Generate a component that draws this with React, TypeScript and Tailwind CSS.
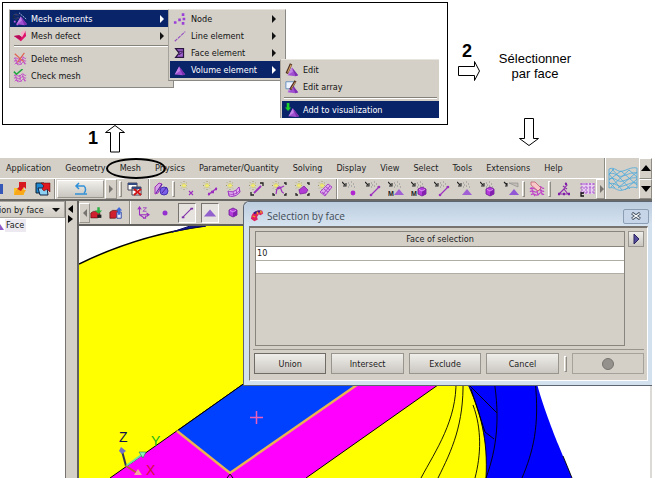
import React from 'react';
import clsx from 'clsx';

interface IconProps {
  children: React.ReactNode;
  size?: string;
}

const Icon: React.FC<IconProps> = ({ children, size = 'w-4 h-4' }) => (
  <svg viewBox="0 0 16 16" className={clsx('shrink-0', size)} fill="none" aria-hidden="true">
    {children}
  </svg>
);

const PURPLE = '#9c2fc0';

const Spark = () => (
  <>
    <path d="M5 0v9M1 4.500h8M2 1.500l6 6M8 1.500l-6 6" stroke="#8a8850" strokeWidth=".8" strokeDasharray="1 1" />
    <path d="M5 2v5M2.500 4.500h5M3 2.500l4 4M7 2.500l-4 4" stroke="#f4ee6a" strokeWidth=".9" />
  </>
);

const Pick = () => (
  <>
    <path d="M0 1l3 3M4 2v3H1" stroke="#222" strokeWidth="1.1" />
    <path d="M6 2h1M9 1h1M11 3h1M7 4h1M9 5h1M12 6h1M6 6h1" stroke="#8a8a8a" strokeWidth="1.1" />
  </>
);

const Cube = ({ x, y }: { x: number; y: number }) => (
  <g transform={`translate(${x} ${y})`}>
    <path d="M4 0l4 2v5l-4 2-4-2V2z" fill="#b63bdc" stroke="#6a1c90" strokeWidth=".8" />
    <path d="M4 4v5l4-2V2z" fill="#8420b0" />
    <path d="M1 2.400L4 4l3-1.600" stroke="#e8a8fc" strokeWidth=".8" />
  </g>
);

const Pyramid = ({ x = 0, y = 0 }: { x?: number; y?: number }) => (
  <g transform={`translate(${x} ${y})`}>
    <path d="M1 11L6 2l7 9-3 1z" fill="#a04fd0" />
    <path d="M6 2l7 9-3 1z" fill="#7d2fb0" />
    <path d="M1 11l5-9 1 5z" fill="#c383e6" />
  </g>
);

const Squiggle = () => (
  <path
    d="M1 8c3-4 5 3 8-1s4 2 6 0M1 11c3-4 5 3 8-1s4 2 6 0M2 14c3-4 5 3 8-1s3 2 5 0M2 7c3 2 0 5 4 8M7 7c3 3-1 4 3 7M12 6c-3 3 2 5 1 8"
    stroke="#c040c8"
    strokeWidth="1.1"
  />
);

const M = () => (
  <text x="0" y="15" fontSize="7" fontWeight="bold" fill="#222" fontFamily="Liberation Sans, sans-serif">
    M
  </text>
);

const PickLine = () => (
  <>
    <Pick />
    <path d="M6 14l8-8" stroke={PURPLE} strokeWidth="1.1" />
    <circle cx="6" cy="14" r="1.300" fill={PURPLE} />
    <circle cx="14" cy="6" r="1.300" fill={PURPLE} />
  </>
);

const creationIcons = [
  <><Spark /><path d="M10 10l4 4M14 10l-4 4" stroke={PURPLE} strokeWidth="1.1" /></>,
  <><Spark /><path d="M6 14l9-7" stroke={PURPLE} strokeWidth="1.2" /><path d="M6 13h2M13 8h2M9 11h3" stroke={PURPLE} strokeWidth="2.4" /></>,
  <><Spark /><path d="M3 10c4 2 8 0 11-4l1 5c-3 4-7 5-11 4z" fill="#e3b4f0" stroke={PURPLE} /><path d="M4 13c4 1 8 0 11-4M8 11l1 4M11 9l1 4" stroke={PURPLE} strokeWidth=".8" /></>,
  <><Spark /><path d="M6 12l7-7" stroke={PURPLE} strokeWidth="1.8" /><path d="M12 2h3v3M3 11v3h3" stroke="#222" strokeWidth="1.3" /></>,
  <><Spark /><path d="M5 13c1-4 0-6 3-7s1 6 5 6M7 8l6-3" stroke={PURPLE} strokeWidth="1.2" /><path d="M13 2h2v2M2 12v2h2M13 14h2v-2" stroke="#222" strokeWidth="1.3" /></>,
  <><Spark /><path d="M5 9l5-4 4 4-2 3-6 1z" fill="#b13bd4" stroke="#7d24a0" strokeWidth=".8" /><path d="M13 2h2v2M2 12v2h2M13 14h2v-2" stroke="#222" strokeWidth="1.3" /></>,
  <><Spark /><path d="M3 11l8-8 4 3-7 9z" fill="#dda9ee" stroke={PURPLE} strokeWidth=".8" /><path d="M5 11l4 3M7 8l4 3M9 6l4 3M6 13l7-8" stroke={PURPLE} strokeWidth=".8" /></>,
];

const pickingIcons = [
  <><Pick /><circle cx="11" cy="12" r="2.400" fill="#b025d0" /></>,
  <PickLine />,
  <><Pick /><path d="M6 14l5-6 5 6z" fill="#a060d4" /><M /></>,
  <><Pick /><Cube x={7} y={6} /><M /></>,
  <PickLine />,
  <><Pick /><path d="M5 14l5-6 5 6z" fill="#a060d4" /></>,
  <><Pick /><Cube x={6} y={6} /></>,
  <><path d="M1 1l3 3M4 2v3H2" stroke="#222" strokeWidth="1.1" /><path d="M6 2h9v4z" fill="#c4bfb9" stroke="#888" strokeWidth=".6" /><path d="M6 14l5-6 5 6z" fill="#9157d4" /></>,
];

const ToolButton: React.FC<{ label: string; className?: string; children: React.ReactNode }> = ({
  label,
  className = 'w-[23px]',
  children,
}) => (
  <button type="button" aria-label={label} className={clsx('flex h-5 shrink-0 items-center justify-center', className)}>
    {children}
  </button>
);

const Handle = () => <span className="h-4 w-[3px] shrink-0 border border-[#8f8c86] border-t-white border-l-white" />;

const Divider = () => <span className="h-full w-[2px] shrink-0 border-l border-[#8f8c86] bg-white" />;

const Chevron = ({ flip = false }: { flip?: boolean }) => (
  <svg viewBox="0 0 6 8" className={clsx('h-2 w-[6px]', flip && 'rotate-180')} aria-hidden="true">
    <path d="M1 0l4 4-4 4z" fill="#77746f" />
  </svg>
);

interface MenuRowProps {
  icon: React.ReactNode;
  label: string;
  active?: boolean;
  submenu?: boolean;
}

const MenuRow: React.FC<MenuRowProps> = ({ icon, label, active, submenu }) => (
  <button
    type="button"
    role="menuitem"
    className={clsx(
      'flex h-[17px] w-full items-center gap-1 pr-1 pl-[3px] text-left whitespace-nowrap',
      active ? 'bg-[#0a246a] text-white' : 'text-[#111]'
    )}
  >
    <Icon size="w-[14px] h-[14px]">{icon}</Icon>
    <span className="flex-1">{label}</span>
    {submenu && (
      <svg viewBox="0 0 4 8" className="h-2 w-1" aria-hidden="true">
        <path d="M0 0l4 4-4 4z" fill="currentColor" />
      </svg>
    )}
  </button>
);

const menuBox = 'border border-[#8b8983] border-t-[#e8e5df] border-l-[#a5a29c] bg-[#d4d0c8]';

const ContextMenus = () => (
  <div className="relative w-[165px]" role="menu" aria-label="Mesh">
    <div className={clsx(menuBox, 'pr-[5px] pb-[3px]')}>
      <MenuRow
        active
        submenu
        label="Mesh elements"
        icon={
          <>
            <text x="0" y="8" fontSize="9" fontWeight="bold" fill="#02020a" stroke="#6a78b0" strokeWidth=".3" fontFamily="Liberation Sans, sans-serif">C</text>
            <path d="M7 1l8 7" stroke="#c8d4f4" strokeDasharray="2 1" />
            <Pyramid x={3} y={3} />
            <path d="M1 11h2M4 14h2" stroke="#c060e8" strokeWidth="2" />
          </>
        }
      />
      <MenuRow
        submenu
        label="Mesh defect"
        icon={<><path d="M1 8l6-1 3 2 4-7 1 6-6 6z" fill="#e0106c" /><path d="M9 4l4-3 1 2-4 7z" fill="#f4b0c8" /><path d="M1 8l6-1 3 2-2 3z" fill="#b40c58" /></>}
      />
      <div className="mt-px mb-[3px] ml-1 border-t border-[#85827c] border-b border-b-white" />
      <MenuRow label="Delete mesh" icon={<><Squiggle /><path d="M2 2l10 9M13 1L5 12" stroke="#e06050" strokeWidth="1.3" /></>} />
      <MenuRow label="Check mesh" icon={<><Squiggle /><path d="M1 3l3 3 7-6" stroke="#20a840" strokeWidth="1.8" /></>} />
    </div>

    <div className={clsx(menuBox, 'absolute top-0 left-[159px] w-[118px] pr-[5px] pb-[2px] pl-px')} role="menu">
      <MenuRow submenu label="Node" icon={<path d="M1 12h3M6 9h3M10 3h3M11 8h3M10 13h3" stroke="#9a40d8" strokeWidth="3" />} />
      <MenuRow submenu label="Line element" icon={<path d="M2 14L14 3" stroke="#9448c0" strokeWidth="1.2" strokeDasharray="4 1" />} />
      <MenuRow submenu label="Face element" icon={<><path d="M3 3h9v10H3l4-5z" fill="#a060d0" stroke="#2a1440" strokeWidth="1.4" /><path d="M6 6h5M7 10l4-3" stroke="#2a1440" /></>} />
      <MenuRow active submenu label="Volume element" icon={<Pyramid x={1} y={2} />} />
    </div>

    <div className={clsx(menuBox, 'absolute top-[50px] left-[271px] w-[159px] border-r-0 border-b-0 pt-px pl-px')} role="menu">
      <MenuRow label="Edit" icon={<><Pyramid x={2} y={3} /><path d="M2 12L7 1" stroke="#4b3020" strokeWidth="3" /><path d="M3 11L7 2" stroke="#d8a068" strokeWidth="1.4" /></>} />
      <MenuRow label="Edit array" icon={<><path d="M1 2h9v8H1z" fill="#eef4ff" stroke="#5b88b8" /><Pyramid x={2} y={3} /><path d="M6 11l6-10" stroke="#4b3020" strokeWidth="2.6" /><path d="M7 10l5-8" stroke="#d8a068" /></>} />
      <div className="mx-[2px] my-[2px] border-t border-[#85827c] border-b border-b-white" />
      <MenuRow active label="Add to visualization" icon={<><Pyramid x={3} y={4} /><path d="M2 0h3v5h2L3.500 9 0 5h2z" fill="#18d028" /></>} />
    </div>
  </div>
);

const menus = [
  'Application',
  'Geometry',
  'Mesh',
  'Physics',
  'Parameter/Quantity',
  'Solving',
  'Display',
  'View',
  'Select',
  'Tools',
  'Extensions',
  'Help',
];

const MenuBar = () => (
  <nav className="flex h-5 items-center gap-[14px] pl-[6px]">
    {menus.map((menu) => (
      <div key={menu} className="relative">
        <button type="button" className="block whitespace-nowrap">
          {menu}
        </button>
        {menu === 'Mesh' && (
          <span className="pointer-events-none absolute -top-1 -left-[14px] z-10 h-[21px] w-[60px] rounded-[50%] border-2 border-black" />
        )}
      </div>
    ))}
  </nav>
);

const MainToolbar = () => (
  <div className="flex h-[21px] items-center overflow-hidden border-t border-white">
    <ToolButton label="Save" className="w-2 justify-start">
      <svg viewBox="0 0 4 12" className="h-3 w-1" aria-hidden="true"><path d="M0 1h3v10H0z" fill="#3558b8" /></svg>
    </ToolButton>
    <ToolButton label="Import">
      <Icon><path d="M2 7h10v7H2z" fill="#f6c530" /><path d="M2 14l2-5h10l-3 5z" fill="#f8a818" /><path d="M5 8l2-2V1h7v7l-2-2-3 4z" fill="#d81820" /></Icon>
    </ToolButton>
    <ToolButton label="Export">
      <Icon><path d="M1 2h8v10H1z" fill="#1e88d0" stroke="#123" /><path d="M3 7h9l1 7H5z" fill="#8cd0f4" stroke="#124" /><path d="M6 2h9v9l-3-3-3 2-2-2 2-3z" fill="#e01820" stroke="#600" strokeWidth=".5" /></Icon>
    </ToolButton>
    <Divider />
    <ToolButton label="Undo" className="mx-px h-[18px] w-[47px] border border-[#98958f] border-t-white border-l-white bg-linear-to-b from-[#f0eeea] to-[#c9c6c0]">
      <Icon><path d="M4 5h7a3 4 0 0 1 0 7M6 2L3 5l3 3M2 13h12" stroke="#3090d8" strokeWidth="1.5" /></Icon>
    </ToolButton>
    <ToolButton label="More undo" className="w-3 border border-[#98958f] border-t-white border-l-white"><Chevron /></ToolButton>
    <span className="ml-[2px] flex"><Handle /></span>
    <ToolButton label="Close windows" className="w-[26px]">
      <Icon><path d="M1 2h9v7H1zM5 6h9v8H5z" fill="#fff" stroke="#445" /><path d="M1 2h9v2H1zM5 6h9v2H5z" fill="#334a80" /><path d="M7 8l7 6M14 8l-7 6" stroke="#d01818" strokeWidth="2" /></Icon>
    </ToolButton>
    <Divider />
    <ToolButton label="Physics" className="w-[22px]">
      <Icon><path d="M2 6l4-4 3 1-4 9-3 1z" fill="#d8a0e4" stroke="#a030b8" /><circle cx="11" cy="10" r="4" fill="#7b60e8" stroke="#4530b0" /><path d="M9 12l5-6M3 12l6-9" stroke="#5020a0" /></Icon>
    </ToolButton>
    <Handle />
    {creationIcons.map((icon, i) => (
      <ToolButton key={i} label={`Create ${i + 1}`}><Icon>{icon}</Icon></ToolButton>
    ))}
    <Divider />
    {pickingIcons.map((icon, i) => (
      <ToolButton key={i} label={`Pick ${i + 1}`}><Icon>{icon}</Icon></ToolButton>
    ))}
    <Handle />
    <ToolButton label="Delete mesh">
      <Icon><Squiggle /><path d="M2 1h4l6 6-3 3-7-6z" fill="#f8c8c8" stroke="#c06070" strokeWidth=".8" /></Icon>
    </ToolButton>
    <Handle />
    <ToolButton label="Axis" className="w-[26px]">
      <Icon><path d="M9 2l2 2-3 4 4 5M8 8l-5 5h11M7 5l4 3" stroke="#9028b0" strokeWidth="1.1" /><path d="M2 13h2M7 13h2M12 13h2M9 3h2" stroke="#8020a8" strokeWidth="2.4" /></Icon>
    </ToolButton>
    <ToolButton label="Grid" className="w-[19px]">
      <Icon><path d="M3 2h12v11H3z" fill="#e8cff0" /><path d="M3 2v11M7 2v11M11 2v11M15 2v11M1 3h15M1 7h15M1 11h15" stroke="#a040c8" strokeWidth=".8" strokeDasharray="2 1" /><path d="M5 12H2v3h3" stroke="#111" strokeWidth="1.3" /></Icon>
    </ToolButton>
    <ToolButton label="More tools" className="ml-auto w-3 border border-[#98958f] border-t-white border-l-white"><Chevron /></ToolButton>
  </div>
);

const MeshSwitcher = () => (
  <div className="flex w-12 shrink-0 border-l border-[#8f8c86]">
    <div className="flex flex-1 items-center justify-center border-l border-white">
      <svg viewBox="0 0 30 26" className="h-[26px] w-[30px]" fill="none" stroke="#49a8dc" strokeWidth=".8" aria-hidden="true">
        <path d="M1 3c6-3 8 4 14 2s9-4 14-3M1 8c6-3 8 4 14 2s9-4 14-3M1 13c6-3 8 4 14 2s9-4 14-3M1 18c6-3 8 4 14 2s9-4 14-3M1 22c6-2 8 4 14 2s9-4 14-2" />
        <path d="M1 3v19M29 2v20M1 8l5-5M1 14L13 5M3 21L21 4M10 22L29 6M17 24l12-11M1 8l13 16M4 3l18 20M13 5l16 14M21 4l8 7M1 16l6 6" />
      </svg>
    </div>
    <div className="flex w-[13px] flex-col">
      <button type="button" aria-label="Previous" className="flex flex-1 items-center justify-center border border-[#8f8c86] border-t-white border-l-white">
        <svg viewBox="0 0 10 6" className="h-[6px] w-[10px]" aria-hidden="true"><path d="M0 6l5-6 5 6z" /></svg>
      </button>
      <button type="button" aria-label="Next" className="flex flex-1 items-center justify-center border border-[#8f8c86] border-t-white border-l-white">
        <svg viewBox="0 0 10 6" className="h-[6px] w-[10px]" aria-hidden="true"><path d="M0 0l5 6 5-6z" /></svg>
      </button>
    </div>
  </div>
);

const SidePanel = () => (
  <aside className="flex w-[66px] shrink-0 flex-col overflow-hidden border-r border-[#77746f] bg-white">
    <div className="relative flex h-[17px] justify-end border border-l-0 border-[#a5a29c] bg-linear-to-b from-[#e8e5df] to-[#d0ccc4]">
      <select aria-label="Selection mode" className="w-[90px] shrink-0 appearance-none bg-transparent text-[#222]">
        <option>Selection by face</option>
      </select>
      <svg viewBox="0 0 8 4" className="pointer-events-none absolute top-[6px] right-1 h-1 w-2" aria-hidden="true">
        <path d="M0 0h8L4 4z" fill="#111" />
      </svg>
    </div>
    <a href="#face" className="flex h-[15px] items-center gap-px leading-[13px] text-[#222]">
      <svg viewBox="0 0 4 8" className="h-2 w-1" aria-hidden="true"><path d="M0 2l4 6H0z" fill="#8e5bc8" /></svg>
      <span className="bg-[#eceaf0] pr-[2px] pl-px">Face</span>
    </a>
  </aside>
);

const Splitter = () => (
  <div className="flex w-[13px] shrink-0 flex-col items-start border-r-2 border-[#63615d] bg-[#d4d0c8] pt-1 pl-[2px]">
    <button type="button" aria-label="Collapse panel">
      <svg viewBox="0 0 5 8" className="h-2 w-[5px]" aria-hidden="true"><path d="M5 0v8L0 4z" /></svg>
    </button>
    <button type="button" aria-label="Expand panel" className="mt-[2px]">
      <svg viewBox="0 0 5 8" className="h-2 w-[5px]" aria-hidden="true"><path d="M0 0v8l5-4z" /></svg>
    </button>
  </div>
);

const ViewToolbar = () => (
  <div className="flex h-[25px] shrink-0 items-center border-b-2 border-[#63615d] bg-[#d4d0c8]">
    <ToolButton label="Previous tools" className="w-[11px] border border-[#98958f] border-t-white border-l-white"><Chevron flip /></ToolButton>
    <ToolButton label="Show part" className="w-[13px]">
      <Icon size="w-[13px] h-4"><path d="M1 8l3-2h8v6l-3 2H1z" fill="#d02030" stroke="#400" strokeWidth=".7" /><path d="M9 1h3v4h3l-4.500 4L6 5h3z" fill="#28b040" /><path d="M9 10h5v4H9z" fill="#222" /></Icon>
    </ToolButton>
    <ToolButton label="Hide part" className="w-[26px]">
      <Icon size="w-[14px] h-[14px]"><path d="M1 7l3-2h6v7l-3 2H1z" fill="#d02030" stroke="#400" strokeWidth=".7" /><path d="M9 7h5v7H9z" fill="#e8e8f8" stroke="#2840a0" /><path d="M10 10V5H8l3.500-4L15 5h-2v5z" fill="#4068d8" /></Icon>
    </ToolButton>
    <Divider />
    <ToolButton label="Show axes">
      <Icon size="w-[14px] h-[14px]"><path d="M4 2v8h10M4 10l6 4M2 4l2-3 2 3M12 8l3 2-3 2M8 14h3v-3" stroke={PURPLE} strokeWidth="1.2" /><path d="M8 2h4l-4 4h4" stroke={PURPLE} strokeWidth=".9" /></Icon>
    </ToolButton>
    <ToolButton label="Show points">
      <Icon><circle cx="7" cy="8" r="2.500" fill="#9430d0" /></Icon>
    </ToolButton>
    <ToolButton label="Show lines" className="ml-px w-[18px] border border-white border-t-[#77746f] border-l-[#77746f] bg-[#e6e3de]">
      <Icon size="w-[14px] h-[14px]"><path d="M3 13L13 3" stroke="#8030a8" strokeWidth="1.2" /><path d="M2 13h3M12 3h3" stroke="#8030a8" strokeWidth="2" /></Icon>
    </ToolButton>
    <ToolButton label="Show faces" className="ml-[5px] w-[18px] border border-white border-t-[#77746f] border-l-[#77746f] bg-[#e6e3de]">
      <Icon size="w-[14px] h-[14px]"><path d="M1 12l7-8 7 8z" fill="#9160cc" /></Icon>
    </ToolButton>
    <ToolButton label="Show volumes" className="w-7"><Icon><Cube x={4} y={3} /></Icon></ToolButton>
  </div>
);

const Scene = () => (
  <svg
    viewBox="79 226 571 252"
    preserveAspectRatio="xMinYMin slice"
    className="absolute inset-0 h-full w-full"
    fill="none"
    role="img"
    aria-label="3D view"
  >
    <path d="M79 226h573v260H79z" fill="#fff" />
    <path d="M79 264C120 244 160 232 205 226h255l8 160c13 22 20 54 18 92H79z" fill="#ff0" />
    <path d="M79 264C120 244 160 232 205 226" stroke="#000" strokeWidth="1.500" />
    <path d="M172 232c14-3 24-5 34-6h-16z" fill="#1018a0" stroke="#101060" />
    <path d="M466 380h70c6 24 18 54 22 64l14 34h-86c2-38-5-66-20-98z" fill="#00f" />
    <g stroke="#000" strokeWidth=".9">
      <path d="M466 380c15 32 22 60 20 98" />
      <path d="M456 380c1 40-20 70-35 98M463 380c1 44-11 70-25 98M473 405c9 24 8 50 2 73" />
      <path d="M494 380c6 38 3 68-8 98M535 380c5 46-2 72-13 98M470 386l27 27M471 389l14 43 9 7M563 456l9 22" />
    </g>
    <path d="M110 478L249 380h196L306 478z" fill="#f0f" />
    <path d="M110 478L249 380M445 380L306 478" stroke="#000" />
    <path d="M177 431l72-51h115l-134 93z" fill="#0040ff" />
    <path d="M177 431l72-51M230 474l-3 4M230 474l3 4" stroke="#000" />
    <path d="M177 431l53 42 134-93" stroke="#ecb450" strokeWidth="2.500" />
    <path d="M250 417.500h13M256.500 411v13" stroke="#e860b8" strokeWidth="1.500" />
    <path d="M126 466l-4-15" stroke="#303050" strokeWidth="2" />
    <path d="M119 451l2-4 5 4-4 3z" fill="#7070c8" />
    <path d="M126 466l17-12" stroke="#70e0a0" strokeWidth="2" />
    <path d="M139 452l7 0-3 6z" fill="#90f0b8" stroke="#208050" strokeWidth=".6" />
    <path d="M126 466l11 7" stroke="#c05040" strokeWidth="2" />
    <path d="M138 469l4 6-8 0z" fill="#f4a8a0" />
    <g fontFamily="Liberation Sans, sans-serif" fontSize="14">
      <text x="119" y="442" fill="#10104c">Z</text>
      <text x="151" y="446" fill="#18b818">Y</text>
      <text x="146" y="475" fill="#d0103c">X</text>
    </g>
  </svg>
);

const DialogButton: React.FC<{ label: string; primary?: boolean }> = ({ label, primary }) => (
  <button
    type="button"
    className={clsx(
      'h-[21px] flex-1 border bg-linear-to-b from-[#f0eeea] to-[#cac7c1]',
      primary ? 'border-[#6f6c67]' : 'border-[#98958f]'
    )}
  >
    {label}
  </button>
);

const SelectionDialog = () => (
  <section
    role="dialog"
    aria-label="Selection by face"
    className="absolute top-0 right-0 left-[243px] rounded-tl-md border border-r-0 border-[#5d6670] bg-[#d3e0ee] pr-1 pb-1 pl-[5px]"
  >
    <header className="-mr-1 -ml-[5px] flex h-6 items-center gap-[3px] rounded-tl-md bg-linear-to-b from-[#bccddf] to-[#d6e3f0] pt-1 pr-[3px] pl-[6px]">
      <Icon size="w-[14px] h-[14px]">
        <path d="M2 7C4 3 8 1 14 2l1 3-3 2-2-1-2 3 1 3-4 2-4-3z" fill="#e02060" />
        <path d="M4 4c3-2 6-3 9-2l-1 2C9 3 7 5 5 6z" fill="#30208c" />
        <path d="M3 8l3 1M8 3l1 3M12 2l1 3" stroke="#f0a020" strokeWidth="1.500" />
      </Icon>
      <h2 className="flex-1 font-['Open_Sans',sans-serif] text-[10px] text-[#3f4a56]">Selection by face</h2>
      <button type="button" aria-label="Close" className="flex h-[15px] w-[26px] items-center justify-center rounded-xs border border-[#8b9eb4] bg-[#c6d6e8]">
        <svg viewBox="0 0 10 8" className="h-2 w-[10px]" fill="none" aria-hidden="true">
          <path d="M1 1l8 6M9 1L1 7" stroke="#445060" strokeWidth="3" />
          <path d="M1.500 1.500l7 5M8.500 1.500l-7 5" stroke="#fff" strokeWidth="1.200" />
        </svg>
      </button>
    </header>
    <div className="border border-t-2 border-white border-t-[#77746f] border-l-[#77746f] bg-[#d4d0c8] p-[3px]">
      <div className="flex items-start gap-[3px] border-b border-[#98958f] pb-[3px]">
        <div className="ml-[2px] h-[115px] flex-1 border border-[#88857f]">
          <table className="w-full border-collapse">
            <thead>
              <tr>
                <th className="h-[14px] border-b border-[#88857f] p-0 font-normal">Face of selection</th>
              </tr>
            </thead>
            <tbody>
              <tr>
                <td className="h-[14px] border-b border-[#b0ada7] bg-white p-0 pl-px">10</td>
              </tr>
              <tr>
                <td className="h-[13px] border-b border-[#b0ada7] bg-white p-0" />
              </tr>
            </tbody>
          </table>
        </div>
        <button type="button" aria-label="Expand list" className="flex h-4 w-4 items-center justify-center border border-[#98958f] bg-linear-to-b from-[#f0eeea] to-[#cac7c1]">
          <svg viewBox="0 0 7 10" className="h-[10px] w-[7px]" aria-hidden="true"><path d="M1 0l5 5-5 5z" fill="#544c9c" stroke="#2a2560" /></svg>
        </button>
      </div>
      <footer className="flex items-center gap-[5px] py-[3px] pl-px">
        <DialogButton primary label="Union" />
        <DialogButton label="Intersect" />
        <DialogButton label="Exclude" />
        <DialogButton label="Cancel" />
        <Handle />
        <button type="button" disabled aria-label="Status" className="flex h-[21px] flex-1 items-center justify-center border border-[#a5a29c]">
          <span className="h-3 w-3 rounded-full border border-[#77746f] bg-[#94918c]" />
        </button>
      </footer>
    </div>
  </section>
);

const Steps = () => (
  <div className="flex pt-[2px] pr-[74px] pl-[2px] text-black">
    <div className="min-w-0 flex-1">
      <div className="border border-black pt-[6px] pb-[36px] pl-[6px]">
        <ContextMenus />
      </div>
      <div className="flex h-[33px] items-start gap-[7px] pl-[86px]">
        <span className="font-['Liberation_Sans',sans-serif] text-lg leading-[26px] font-bold">1</span>
        <svg viewBox="0 0 20 28" className="h-7 w-5" fill="#fff" stroke="#000" aria-hidden="true">
          <path d="M5.500 27V7.500H.5L10 .5l9.500 7h-5V27z" />
        </svg>
      </div>
    </div>
    <div className="flex w-8 shrink-0 flex-col items-end pt-10">
      <span className="pr-2 font-['Liberation_Sans',sans-serif] text-lg leading-[19px] font-bold">2</span>
      <svg viewBox="0 0 22 20" className="h-5 w-[22px]" fill="#fff" stroke="#000" aria-hidden="true">
        <path d="M.5 5.500h16v-5l5 9.500-5 9.500v-5H.5z" />
      </svg>
    </div>
    <div className="flex w-[98px] shrink-0 flex-col items-center pt-[49px] font-['Liberation_Sans',sans-serif] text-[13px] leading-[15px]">
      <p className="pl-3 text-center">
        Sélectionner
        <br />
        par face
      </p>
      <svg viewBox="0 0 20 28" className="mt-[37px] h-7 w-5" fill="#fff" stroke="#000" aria-hidden="true">
        <path d="M5.500.5v20H.5l9.500 7 9.500-7h-5V.5z" />
      </svg>
    </div>
  </div>
);

export default function App() {
  return (
    <div className="flex min-h-screen flex-col overflow-hidden bg-white pr-[3px] font-['DejaVu_Sans_Condensed','DejaVu_Sans',sans-serif] text-[9px] leading-3 text-[#222]">
      <Steps />
      <div className="flex border-b-2 border-[#6b6965] bg-[#d4d0c8]">
        <div className="min-w-0 flex-1">
          <MenuBar />
          <MainToolbar />
        </div>
        <MeshSwitcher />
      </div>
      <main className="relative flex min-h-[276px] flex-1">
        <SidePanel />
        <Splitter />
        <div className="flex min-w-0 flex-1 flex-col">
          <ViewToolbar />
          <div className="relative flex-1 overflow-hidden border-r-2 border-[#dcdad6]">
            <Scene />
          </div>
        </div>
        <SelectionDialog />
      </main>
    </div>
  );
}
